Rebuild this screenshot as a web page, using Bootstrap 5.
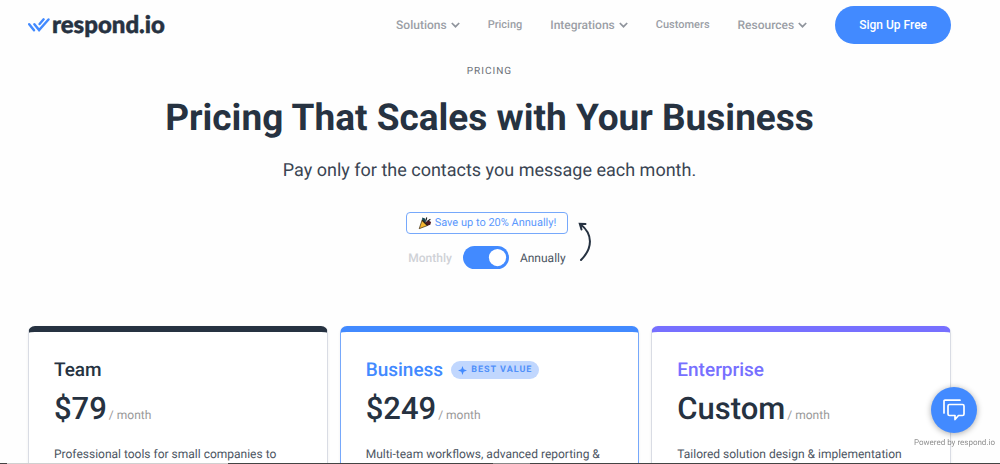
<!DOCTYPE html>
<html lang="en">
<head>
<meta charset="utf-8">
<meta name="viewport" content="width=device-width, initial-scale=1">
<title>Pricing | respond.io</title>
<link href="https://cdn.jsdelivr.net/npm/bootstrap@5.3.0/dist/css/bootstrap.min.css" rel="stylesheet">
<style>
  :root { --ink: #263241; --blue: #428aff; --violet: #7770ff; --soft: #9b9fa6; }
  body { font-family: Roboto, "Liberation Sans", sans-serif; color: var(--ink); background: #fefefe; text-rendering: geometricPrecision; }
  .page { height: 100vh; overflow: hidden; padding-left: 28px; padding-right: 49px; }
  .site-bar { height: 50px; }
  .brand { font: 900 24px/28px Lato, sans-serif; color: var(--ink); gap: 2px; -webkit-text-stroke: 0.5px var(--ink); }
  .menu { gap: 28px; }
  .menu a { color: var(--soft); font-size: 11px; font-weight: 500; line-height: 16px; gap: 4px; }
  .menu a.has-sub { font-size: 12px; }
  .btn-signup { background: var(--blue); color: #fff; font-size: 12px; font-weight: 500; line-height: 16px; padding: 11px 24px; }
  .btn-signup:hover { background: #2f79f0; color: #fff; }
  .eyebrow { font-size: 10px; line-height: 12px; letter-spacing: 1px; color: #6b7078; margin-top: 16px; }
  h1 { font-size: 37px; line-height: 46px; font-weight: 700; margin: 18px 0 0; }
  .lede { font-size: 18px; line-height: 24px; color: #3a4553; margin: 17px 0 0; }
  .billing { margin-top: 29px; padding-right: 5px; }
  .save-note { border: 1px solid #76a8fb; border-radius: 4px; color: #5b98fd; font-size: 11px; line-height: 20px; padding: 0 11px; gap: 3px; }
  .toggle-row { gap: 11px; font-size: 12px; line-height: 22px; font-weight: 500; }
  .toggle-row .off { color: #cfd1d6; }
  .toggle-row .on { color: #4c5562; font-weight: 400; }
  .form-check-input.cycle { width: 46px; height: 23px; margin: 0; border: 0; background-color: #fff; }
  .form-switch .cycle:checked { background-color: var(--blue); }
  .plans { margin-top: 57px; --bs-gutter-x: 12px; }
  .plan { border: 1px solid #d9dce4; border-top: 6px solid var(--tone); border-radius: 7px; height: 340px; padding: 24px 25px; background: #fff; box-shadow: 0 1px 3px #26324112; }
  .plan.best { border-color: #76a8fb; border-top-color: var(--tone); }
  .plan h2 { font-size: 19px; line-height: 28px; font-weight: 500; color: var(--tone); margin: 0; }
  .best-tag { background: #c1d7fe; color: #5291fa; border-radius: 9px; font-size: 9px; line-height: 18px; font-weight: 700; letter-spacing: 1px; padding: 0 7px; gap: 4px; }
  .price { margin-top: 4px; font-size: 31px; line-height: 42px; font-weight: 500; gap: 2px; }
  .price small { font-size: 12px; font-weight: 400; color: #999; }
  .blurb { font-size: 12px; line-height: 18px; color: #4c5562; margin: 9px 0 0; }
  .chat { right: 5px; bottom: 15px; gap: 4px; }
  .chat-btn { width: 46px; height: 46px; border: 0; background: var(--blue); box-shadow: 0 1px 6px #0005; }
  .chat small { font-size: 8px; line-height: 12px; color: #8f8f8f; }
  .dock { height: 1px; background: linear-gradient(90deg, #444 7px, #d0d0d0 7px 228px, #444 228px 493px, #888 493px 530px, #444 530px); }
</style>
</head>
<body>
<div class="page">
  <header class="site-bar d-flex align-items-center justify-content-between">
    <a href="#" class="brand d-flex align-items-center text-decoration-none">
      <svg width="22" height="16" viewBox="0 0 22 16" fill="none" stroke="#428aff" stroke-width="2.4" stroke-linecap="round" aria-hidden="true"><path d="M1.200 7.200 6 13.300M6.400 7.200l4.700 5.900L20.500 2.500M11.600 7l4-4.700"/></svg>
      <span>respond.io</span>
    </a>
    <nav class="menu d-flex align-items-center">
      <a href="#" class="has-sub d-flex align-items-center text-decoration-none">Solutions <svg width="9" height="6" viewBox="0 0 9 6" fill="none" stroke="#8f949c" stroke-width="1.7"><path d="M.8 1l3.700 3.700L8.200 1"/></svg></a>
      <a href="#" class="text-decoration-none">Pricing</a>
      <a href="#" class="has-sub d-flex align-items-center text-decoration-none">Integrations <svg width="9" height="6" viewBox="0 0 9 6" fill="none" stroke="#8f949c" stroke-width="1.7"><path d="M.8 1l3.700 3.700L8.200 1"/></svg></a>
      <a href="#" class="text-decoration-none">Customers</a>
      <a href="#" class="has-sub d-flex align-items-center text-decoration-none">Resources <svg width="9" height="6" viewBox="0 0 9 6" fill="none" stroke="#8f949c" stroke-width="1.7"><path d="M.8 1l3.700 3.700L8.200 1"/></svg></a>
      <button type="button" class="btn btn-signup rounded-pill border-0">Sign Up Free</button>
    </nav>
  </header>

  <main>
    <section class="text-center">
      <div class="eyebrow">PRICING</div>
      <h1>Pricing That Scales with Your Business</h1>
      <p class="lede">Pay only for the contacts you message each month.</p>
    </section>

    <section class="billing d-flex flex-column align-items-center">
      <div class="position-relative d-flex flex-column align-items-center gap-2">
        <div class="save-note d-flex align-items-center">
          <svg width="14" height="14" viewBox="0 0 14 14" aria-hidden="true"><path d="M4.200 3.800 1.200 12.700 9.600 9.500z" fill="#f5b52e" stroke="#3a2a12" stroke-width=".7"/><path d="M4.200 1.500 7 2.500l1.300 3L6.500 6.300 4.200 4z" fill="#154451"/><path d="M7 6.200 10.500 4.500l2.600 1.600-.8 2.700-3 .9z" fill="#4d1820"/><path d="M8.700 1.500 8 4.700M12.400 3.200 9.500 5.300" stroke="#222" stroke-width="1.200"/><path d="M4.200 4.200 9.300 9.300" stroke="#2a2018" stroke-width="1.300"/></svg>
          <span>Save up to 20% Annually!</span>
        </div>
        <div class="toggle-row d-flex align-items-center mt-1">
          <label class="off" for="cycle">Monthly</label>
          <div class="form-switch p-0 m-0 d-flex"><input class="form-check-input cycle" type="checkbox" role="switch" id="cycle" aria-label="Annual billing" checked></div>
          <label class="on" for="cycle">Annually</label>
        </div>
        <svg class="position-absolute top-0 start-100 mt-2 ms-2" width="18" height="44" viewBox="0 0 18 44" fill="none" stroke="#263241" stroke-width="2" stroke-linecap="round" aria-hidden="true"><path d="M5 40C17 28 17 14 4.500 4.200M5.500 9.500L3.800 3.800L9.500 4"/></svg>
      </div>
    </section>

    <section class="plans row flex-nowrap">
      <div class="col-4">
        <article class="plan" style="--tone:#263241">
          <h2>Team</h2>
          <div class="price d-flex align-items-baseline">$79<small>/ month</small></div>
          <p class="blurb">Professional tools for small companies to</p>
        </article>
      </div>
      <div class="col-4">
        <article class="plan best" style="--tone:#428aff">
          <div class="d-flex align-items-center gap-2">
            <h2>Business</h2>
            <span class="best-tag d-inline-flex align-items-center"><svg width="9" height="9" viewBox="0 0 10 10" fill="#428aff" aria-hidden="true"><path d="M5 0 6.300 3.700 10 5 6.300 6.300 5 10 3.700 6.300 0 5 3.700 3.700z"/></svg>BEST VALUE</span>
          </div>
          <div class="price d-flex align-items-baseline">$249<small>/ month</small></div>
          <p class="blurb">Multi-team workflows, advanced reporting &amp;</p>
        </article>
      </div>
      <div class="col-4">
        <article class="plan" style="--tone:#7770ff">
          <h2>Enterprise</h2>
          <div class="price d-flex align-items-baseline">Custom<small>/ month</small></div>
          <p class="blurb">Tailored solution design &amp; implementation</p>
        </article>
      </div>
    </section>
  </main>
</div>

<div class="chat position-fixed d-flex flex-column align-items-center">
  <button type="button" class="chat-btn rounded-circle p-0 d-flex align-items-center justify-content-center" aria-label="Open chat">
    <svg width="24" height="24" viewBox="0 0 24 24" fill="none" stroke="#fff" stroke-width="1.700" stroke-linejoin="round" stroke-linecap="round"><path d="M2 15V3.200Q2 2.200 3 2.200H18"/><path d="M7.500 6.500H20.500Q22 6.500 22 8V16Q22 17.500 20.500 17.500H16.500L13 21.500V17.500H7.500Q6 17.500 6 16V8Q6 6.500 7.500 6.500Z"/></svg>
  </button>
  <small>Powered by respond.io</small>
</div>
<div class="dock position-fixed bottom-0 start-0 end-0"></div>
<script src="https://cdn.jsdelivr.net/npm/bootstrap@5.3.0/dist/js/bootstrap.bundle.min.js"></script>
</body>
</html>
